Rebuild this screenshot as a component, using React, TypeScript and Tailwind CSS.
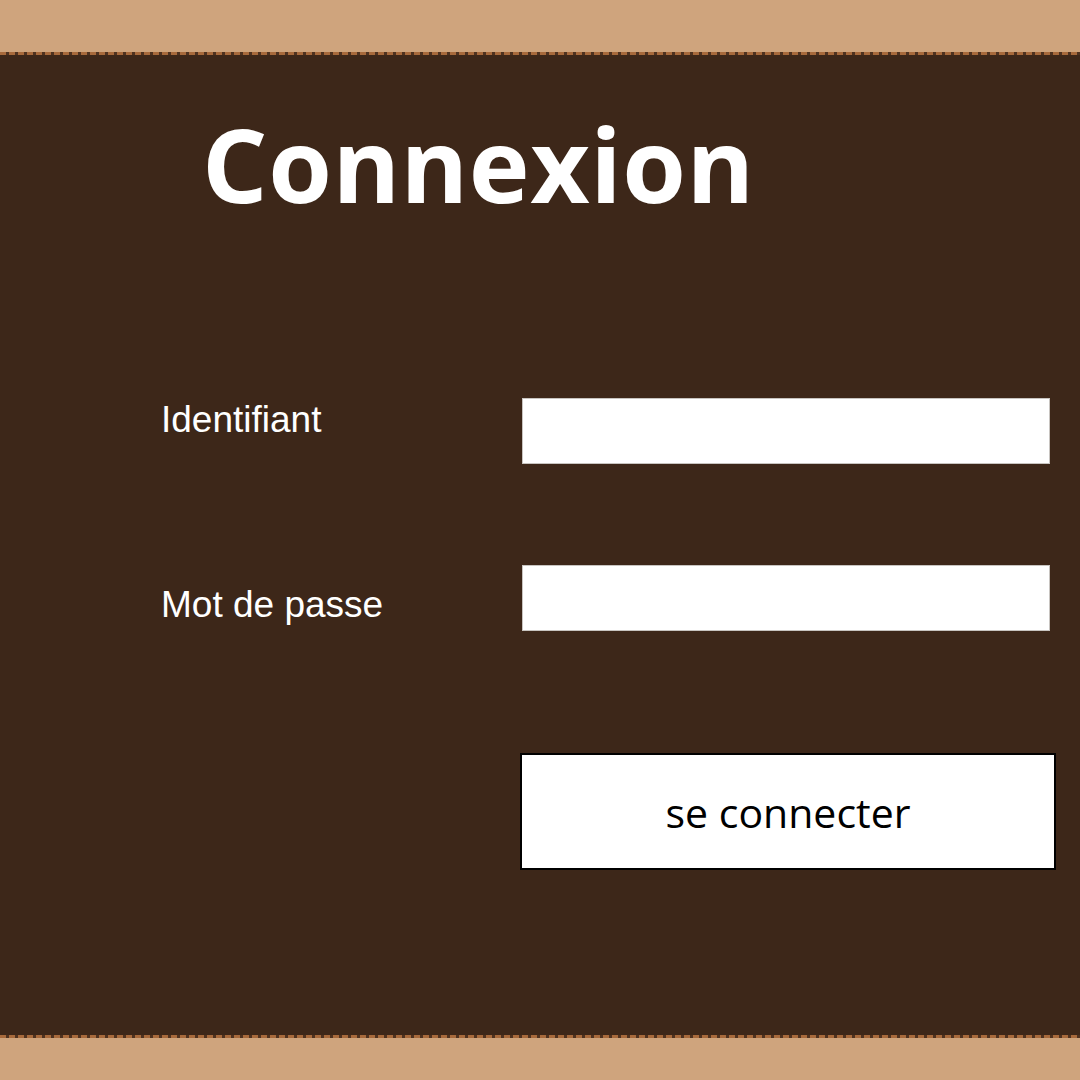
import React from 'react'

function Stitch() {
  return <div className="h-[3px] w-full bg-[repeating-linear-gradient(90deg,#a86a3c_0_6px,#4e3220_6px_9px)]" />
}

export default function App() {
  return (
    <div className="flex flex-col w-[1080px] h-[1080px] bg-[#cfa47d] overflow-hidden">
      <div className="h-[52px] shrink-0" />
      <Stitch />
      <div className="flex-1 bg-[#3d2719] relative">
        <h1 className="pl-[202px] pt-[38px] text-[103px] leading-[140px] font-bold text-white font-['Open_Sans',sans-serif] tracking-[0.5px]">
          Connexion
        </h1>

        <div className="pl-[161px] pt-[165px] font-['Liberation_Sans',Arial,sans-serif] text-white text-[37px]">
          <div className="flex items-start">
            <label className="w-[361px] pt-[2px] leading-[40px]">Identifiant</label>
            <input className="w-[528px] h-[66px] bg-white border border-[#c8c4c0] outline-none" />
          </div>

          <div className="flex items-start mt-[101px]">
            <label className="w-[361px] pt-[20px] leading-[40px]">Mot de passe</label>
            <input type="password" className="w-[528px] h-[66px] bg-white border border-[#c8c4c0] outline-none" />
          </div>

          <div className="flex mt-[122px]">
            <div className="w-[359px]" />
            <button className="w-[536px] h-[117px] bg-white border-2 border-black text-black text-[41px] font-['Open_Sans',sans-serif] pt-[2px]">
              se connecter
            </button>
          </div>
        </div>
      </div>
      <Stitch />
      <div className="h-[42px] shrink-0" />
    </div>
  )
}
